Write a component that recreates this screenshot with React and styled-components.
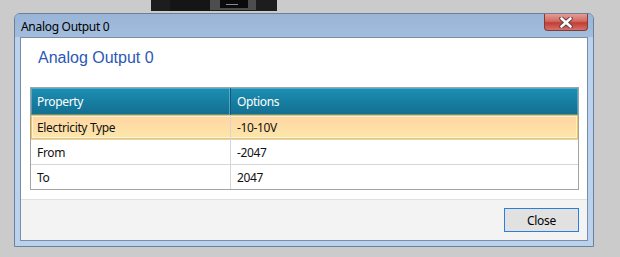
import React from 'react';
import styled, { createGlobalStyle } from 'styled-components';

const GlobalStyle = createGlobalStyle`
    body {
        margin: 0;
        background: #cbcbcb;
        overflow: hidden;
    }
`;

const rows = [
    { name: 'Electricity Type', value: '-10-10V', selected: true },
    { name: 'From', value: '-2047' },
    { name: 'To', value: '2047' },
];

function DevicePicture() {
    return (
        <svg width="126" height="11" viewBox="0 0 126 11">
            <rect x="0" y="0" width="126" height="11" fill="#1d1d1d" />
            <rect x="19" y="0" width="40" height="11" fill="#151515" />
            <rect x="59" y="0" width="46" height="10" fill="#4d4d4d" />
            <rect x="69" y="0" width="28" height="8" fill="#0b0b0b" />
            <rect x="75" y="4" width="12" height="1" fill="#8a8a8a" />
        </svg>
    );
}

function CloseGlyph() {
    return (
        <svg width="14" height="11" viewBox="0 0 14 11">
            <path d="M2.5 1.5 L11.5 9.5 M11.5 1.5 L2.5 9.5" stroke="#5a3a3a" strokeWidth="4.4" strokeLinecap="round" />
            <path d="M2.5 1.5 L11.5 9.5 M11.5 1.5 L2.5 9.5" stroke="#ffffff" strokeWidth="2.6" strokeLinecap="round" />
        </svg>
    );
}

function App() {
    return (
        <Desktop>
            <GlobalStyle />
            <DeviceStrip>
                <DevicePicture />
            </DeviceStrip>
            <Window>
                <TitleBar>
                    <TitleText>Analog Output 0</TitleText>
                    <CloseButton aria-label="close">
                        <CloseGlyph />
                    </CloseButton>
                </TitleBar>
                <Frame>
                    <Client>
                        <Main>
                            <Heading>Analog Output 0</Heading>
                            <Table>
                                <HeaderRow>
                                    <HeaderCell first>Property</HeaderCell>
                                    <HeaderCell>Options</HeaderCell>
                                </HeaderRow>
                                {rows.map((row, i) => (
                                    <Row key={row.name} selected={row.selected} last={i === rows.length - 1}>
                                        <Cell first>{row.name}</Cell>
                                        <Cell>{row.value}</Cell>
                                    </Row>
                                ))}
                            </Table>
                        </Main>
                        <Footer>
                            <Button>Close</Button>
                        </Footer>
                    </Client>
                </Frame>
            </Window>
        </Desktop>
    );
}

const uiFont = `"Noto Sans", "Open Sans", sans-serif`;

const Desktop = styled.div`
    width: 620px;
    height: 257px;
    display: flex;
    flex-direction: column;
`;

const DeviceStrip = styled.div`
    height: 13px;
    padding-left: 151px;
    display: flex;
    align-items: flex-start;
    line-height: 0;
`;

const Window = styled.div`
    margin-left: 14px;
    width: 580px;
    height: 234px;
    box-sizing: border-box;
    border: 1px solid #6f8096;
    border-radius: 6px 6px 0 0;
    background: #bad2ee;
    display: flex;
    flex-direction: column;
    overflow: hidden;
`;

const TitleBar = styled.div`
    height: 23px;
    flex: none;
    display: flex;
    justify-content: space-between;
    align-items: flex-start;
    padding: 0 5px 0 6px;
    background: linear-gradient(#99b5d7, #a2bddd);
`;

const TitleText = styled.span`
    font-family: ${uiFont};
    font-size: 12px;
    letter-spacing: -0.3px;
    line-height: 25px;
    color: #000;
`;

const CloseButton = styled.div`
    width: 44px;
    height: 17px;
    box-sizing: border-box;
    border: 1px solid #843a36;
    border-top: none;
    border-radius: 0 0 4px 4px;
    background: linear-gradient(#e29c95 0%, #d26a62 45%, #c23d35 55%, #d4716a 100%);
    display: flex;
    align-items: center;
    justify-content: center;
`;

const Frame = styled.div`
    flex: 1;
    display: flex;
    padding: 0 5px 5px;
`;

const Client = styled.div`
    flex: 1;
    border: 1px solid #7b8ea5;
    background: #fff;
    display: flex;
    flex-direction: column;
`;

const Main = styled.div`
    height: 161px;
    display: flex;
    flex-direction: column;
`;

const Heading = styled.div`
    padding: 10px 0 0 17px;
    height: 20px;
    margin-bottom: 19px;
    font-family: "Liberation Sans", Arial, sans-serif;
    font-size: 16px;
    line-height: 20px;
    color: #2b58b5;
`;

const Table = styled.div`
    margin: 0 8px 0 9px;
    border: 1px solid #a3a3a3;
    font-family: ${uiFont};
    font-size: 12px;
    letter-spacing: -0.35px;
`;

const HeaderRow = styled.div`
    display: grid;
    grid-template-columns: 200px 1fr;
    height: 27px;
    background: linear-gradient(#1b8fb2, #136e91);
    box-shadow: inset 0 0 0 1px rgba(140, 205, 225, 0.45);
`;

const HeaderCell = styled.div`
    display: flex;
    align-items: center;
    padding-left: 6px;
    color: #fff;
    border-right: ${p => (p.first ? '1px solid #0e5c7a' : 'none')};
    box-shadow: ${p => (p.first ? 'inset -1px 0 0 rgba(140, 205, 225, 0.5)' : 'none')};
`;

const Row = styled.div`
    display: grid;
    grid-template-columns: 200px 1fr;
    height: ${p => (p.last ? '24px' : '25px')};
    box-sizing: border-box;
    border-bottom: ${p => (p.last ? 'none' : '1px solid #d6d6d6')};
    background: ${p => (p.selected ? 'linear-gradient(#ffd5a3, #fde7a9)' : '#fff')};
    box-shadow: ${p => (p.selected ? 'inset 0 0 0 1px #f5c448, inset 0 0 0 2px rgba(255,255,255,0.55)' : 'none')};
`;

const Cell = styled.div`
    display: flex;
    align-items: center;
    padding-left: 6px;
    color: #111;
    border-right: ${p => (p.first ? '1px solid #d6d6d6' : 'none')};
`;

const Footer = styled.div`
    flex: 1;
    border-top: 1px solid #dfdfdf;
    background: #f3f3f3;
    display: flex;
    justify-content: flex-end;
    align-items: flex-start;
    padding: 8px 8px 0;
`;

const Button = styled.button`
    width: 75px;
    height: 24px;
    border: 1px solid #2a7fdc;
    background: #e1e1e1;
    font-family: ${uiFont};
    font-size: 12px;
    letter-spacing: -0.3px;
    color: #000;
    padding: 0;
`;

export default App;
